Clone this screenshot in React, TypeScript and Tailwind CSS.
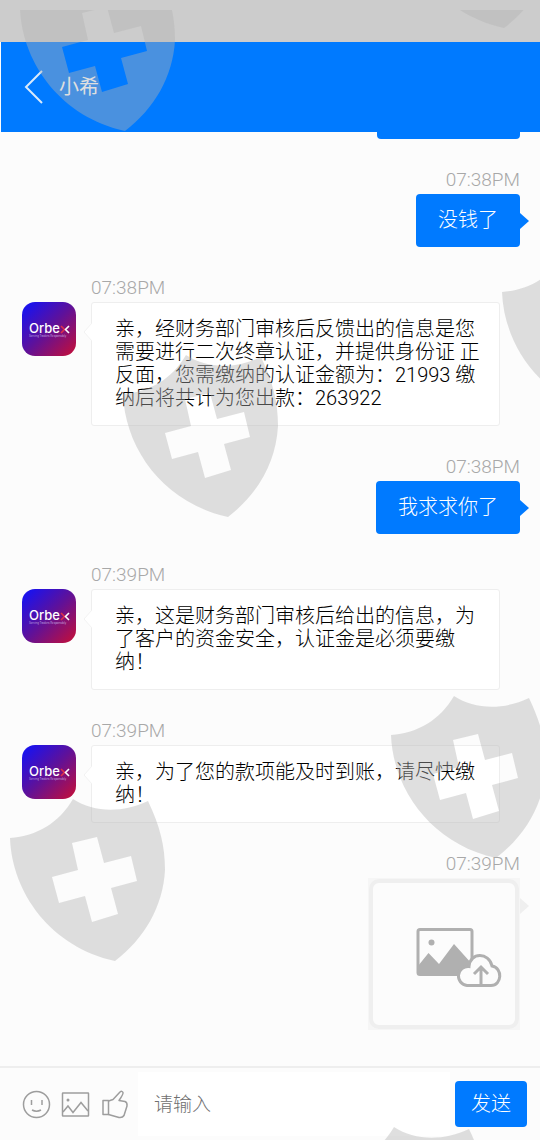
import type { ReactNode } from "react";

type Message = {
  from: "agent" | "user";
  time: string;
  text?: string;
};

const messages: Message[] = [
  { from: "user", time: "07:38PM", text: "没钱了" },
  {
    from: "agent",
    time: "07:38PM",
    text: "亲，经财务部门审核后反馈出的信息是您需要进行二次终章认证，并提供身份证 正反面，您需缴纳的认证金额为：21993 缴纳后将共计为您出款：263922",
  },
  { from: "user", time: "07:38PM", text: "我求求你了" },
  {
    from: "agent",
    time: "07:39PM",
    text: "亲，这是财务部门审核后给出的信息，为了客户的资金安全，认证金是必须要缴纳！",
  },
  {
    from: "agent",
    time: "07:39PM",
    text: "亲，为了您的款项能及时到账，请尽快缴纳！",
  },
  { from: "user", time: "07:39PM" },
];

// Free placement of the stamps over the page
const stamps = [
  "left-[20px] top-[-42px]",
  "left-[399px] top-[-145px]",
  "left-[502px] top-[242px]",
  "left-[123px] top-[344px]",
  "left-[391px] top-[685px]",
  "left-[10px] top-[788px]",
  "left-[331px] top-[1116px]",
];

function Shield({ className }: { className: string }) {
  return (
    <svg
      width="156"
      height="164"
      viewBox="0 0 156 164"
      className={`absolute max-w-none ${className}`}
    >
      <path
        fill="#b1b1b1"
        fillOpacity="0.417"
        fillRule="evenodd"
        d="M0 40 C27 38 49 25 63 1 C84 15 113 15 138 3 C150 28 155 48 155 72 C153 109 134 141 105 163 C41 149 2 95 0 40Z M62 45 L87 39 L94 65 L121 58 L127 83 L101 90 L108 116 L82 124 L75 98 L49 105 L42 79 L68 72Z"
      />
    </svg>
  );
}

function Avatar() {
  return (
    <svg width="54" height="54" viewBox="0 0 54 54" className="shrink-0">
      <defs>
        <linearGradient id="avatar" x1="0" y1="0" x2="1" y2="1">
          <stop offset="0.1" stopColor="#1d12ea" />
          <stop offset="0.5" stopColor="#5f1199" />
          <stop offset="1" stopColor="#c80f35" />
        </linearGradient>
      </defs>
      <rect width="54" height="54" rx="13" fill="url(#avatar)" />
      <text x="7" y="31" fill="#fff" className="font-['Inter'] text-[13px] font-medium">
        Orbe
      </text>
      <path d="M39 24 L42.500 27.500 L39 31" fill="none" stroke="#e0304a" strokeWidth="1.600" />
      <path d="M47 24 L43.500 27.500 L47 31" fill="none" stroke="#fff" strokeWidth="1.600" />
      <text x="7" y="35" fill="#d9c8ee" className="font-['Roboto'] text-[3px]">
        Serving Traders Responsibly
      </text>
    </svg>
  );
}

function Time({ children }: { children: ReactNode }) {
  return (
    <time className="mb-1 block text-[19px] leading-5 text-[#a8a8a8]">
      {children}
    </time>
  );
}

function ImageBubble() {
  return (
    <div className="relative bg-[#f6f6f6] p-px">
      <div className="flex h-[150px] w-[150px] items-center justify-center rounded-[10px] border-4 border-[#efefef] bg-[#fcfcfc]">
        <svg width="142" height="142" viewBox="0 0 142 142" fill="none">
          <rect x="45" y="46.500" width="54" height="45" rx="2" stroke="#b0b0b0" strokeWidth="3" />
          <circle cx="58.500" cy="59.500" r="3" fill="#b0b0b0" />
          <path d="M45 83 L55.500 70 L66 81 L81 61 L99 81 V92 H45Z" fill="#b0b0b0" />
          <path
            d="M94 102.500 A9.500 9.500 0 0 1 96 83.500 C97 69 116 69 119 83 C130 85 129 102.500 118 102.500Z"
            fill="#fcfcfc"
            stroke="#b0b0b0"
            strokeWidth="3"
          />
          <path d="M108 102 V85 M101 91 L108 84 L115 91" stroke="#b0b0b0" strokeWidth="3" />
        </svg>
      </div>
      <svg width="9" height="16" className="absolute left-full top-5">
        <path d="M0 0 L9 8 L0 16Z" fill="#efefef" />
      </svg>
    </div>
  );
}

function UserMessage({ time, text }: Message) {
  return (
    <div className="mr-5 flex flex-col items-end">
      <Time>{time}</Time>
      {text ? (
        <div className="relative rounded-[4px] bg-[#007aff] px-[22px] py-[15px] text-[20px] leading-[23px] text-white">
          {text}
          <svg width="9" height="16" className="absolute left-full top-[19px]">
            <path d="M0 0 L9 8 L0 16Z" fill="#007aff" />
          </svg>
        </div>
      ) : (
        <ImageBubble />
      )}
    </div>
  );
}

function AgentMessage({ time, text }: Message) {
  return (
    <div className="ml-[22px] mr-10">
      <div className="ml-[69px]">
        <Time>{time}</Time>
      </div>
      <div className="flex items-start gap-[15px]">
        <Avatar />
        <div className="relative flex-1 rounded-[3px] border border-[#eeeeee] bg-white py-[15px] pl-[23px] pr-4 text-[20px] leading-[23px] text-black">
          {text}
          <svg width="9" height="18" className="absolute right-full top-5">
            <path d="M9 0 L1 9 L9 18" fill="#fff" stroke="#f2f2f2" />
          </svg>
        </div>
      </div>
    </div>
  );
}

function ChatInput() {
  return (
    <form
      className="flex items-center border-t-2 border-[#eeeeee] py-1 pl-[22px] pr-[13px]"
      onSubmit={(e) => e.preventDefault()}
    >
      <div className="flex gap-[10px] text-[#9d9d9d]">
        <button type="button" aria-label="表情">
          <svg width="29" height="29" viewBox="0 0 29 29" fill="none" stroke="currentColor" strokeWidth="1.500">
            <circle cx="14.500" cy="14.500" r="13" />
            <path d="M9.500 10 V15 M20 10 V15 M10 20 Q14.500 22.500 19 20" />
          </svg>
        </button>
        <button type="button" aria-label="图片">
          <svg width="29" height="29" viewBox="0 0 29 29" fill="none" stroke="currentColor" strokeWidth="1.500">
            <rect x="1.500" y="3" width="26" height="23" rx="0.500" />
            <circle cx="7" cy="10" r="1.500" fill="currentColor" stroke="none" />
            <path d="M2 22 L7 16 L12 22.500 L20 12.500 L27 21" />
          </svg>
        </button>
        <button type="button" aria-label="点赞">
          <svg width="29" height="29" viewBox="0 0 29 29" fill="none" stroke="currentColor" strokeWidth="1.500" strokeLinejoin="round">
            <path d="M3 10.500 H8.500 V24.500 H3Z" />
            <path d="M8.500 11 L13 9.500 L20 2 Q22 0.500 23 2.500 Q23.500 4 19 10.500 L25 11.500 Q27.500 12.500 27 16 L24 25.500 Q22.500 28 19 27.500 L8.500 24.500" />
          </svg>
        </button>
      </div>
      <input
        type="text"
        aria-label="请输入"
        placeholder="请输入"
        className="ml-[9px] h-16 min-w-0 flex-1 bg-white px-4 text-[19px] text-[#333333] outline-none placeholder:text-[#707070]"
      />
      <button
        type="submit"
        className="ml-[5px] h-[46px] w-[72px] rounded-[4px] bg-[#007aff] text-[20px] text-white"
      >
        发送
      </button>
    </form>
  );
}

export default function App() {
  return (
    <div className="relative flex min-h-screen flex-col overflow-hidden bg-[#fcfcfc] font-['Roboto','Noto_Sans_CJK_SC',sans-serif] font-light">
      {/* Status bar */}
      <div className="h-[42px] bg-[#cccccc]" />

      <header className="ml-px flex h-[90px] items-center gap-4 bg-[#007aff] pl-[22px] text-white">
        <button type="button" aria-label="返回">
          <svg width="20" height="34" viewBox="0 0 20 34" fill="none" stroke="#d9eafc" strokeWidth="2">
            <path d="M19 1 L3 17 L19 33" />
          </svg>
        </button>
        <h1 className="text-[20px] font-normal text-white">小希</h1>
      </header>

      <main className="flex flex-1 flex-col gap-[31px]">
        {/* Bottom edge of the message scrolled under the header */}
        <div className="mr-5 h-[7px] w-[143px] self-end rounded-b-[4px] bg-[#007aff]" />
        {messages.map((message, i) =>
          message.from === "user" ? (
            <UserMessage key={i} {...message} />
          ) : (
            <AgentMessage key={i} {...message} />
          )
        )}
      </main>

      <ChatInput />

      {/* Watermark */}
      <div
        aria-hidden="true"
        className="pointer-events-none absolute inset-x-0 bottom-0 top-[10px] overflow-hidden"
      >
        {stamps.map((place) => (
          <Shield key={place} className={place} />
        ))}
      </div>
    </div>
  );
}
